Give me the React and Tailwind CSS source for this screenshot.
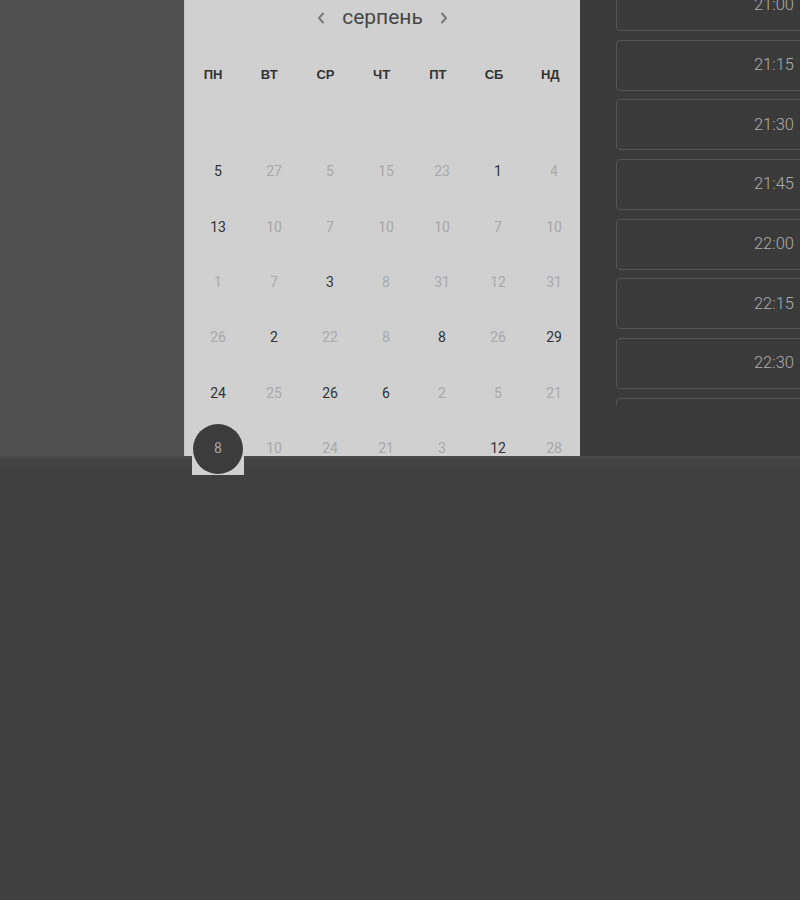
import React from "react";

const days = ["ПН", "ВТ", "СР", "ЧТ", "ПТ", "СБ", "НД"];

// d = dark (in month), l = light, s = selected
const rows = [
  [["5", "d"], ["27", "l"], ["5", "l"], ["15", "l"], ["23", "l"], ["1", "d"], ["4", "l"]],
  [["13", "d"], ["10", "l"], ["7", "l"], ["10", "l"], ["10", "l"], ["7", "l"], ["10", "l"]],
  [["1", "l"], ["7", "l"], ["3", "d"], ["8", "l"], ["31", "l"], ["12", "l"], ["31", "l"]],
  [["26", "l"], ["2", "d"], ["22", "l"], ["8", "l"], ["8", "d"], ["26", "l"], ["29", "d"]],
  [["24", "d"], ["25", "l"], ["26", "d"], ["6", "d"], ["2", "l"], ["5", "l"], ["21", "l"]],
  [["8", "s"], ["10", "l"], ["24", "l"], ["21", "l"], ["3", "l"], ["12", "d"], ["28", "l"]],
];

const slots = ["21:00", "21:15", "21:30", "21:45", "22:00", "22:15", "22:30", ""];

const Chevron = ({ dir }) => (
  <svg width="8" height="12" viewBox="0 0 8 12" fill="none" className="text-[#7a7a7a]">
    <path
      d={dir === "left" ? "M6 1.5 L2 6 L6 10.5" : "M2 1.5 L6 6 L2 10.5"}
      stroke="currentColor"
      strokeWidth="2"
      strokeLinecap="round"
      strokeLinejoin="round"
    />
  </svg>
);

const DayCell = ({ value, tone }) => {
  if (tone === "s") {
    return (
      <div className="flex h-[55.4px] items-center justify-center">
        <div className="relative z-20 flex h-[52px] w-[52px] items-center justify-center bg-[#d0d0d0]">
          <div className="flex h-[50px] w-[50px] items-center justify-center rounded-full bg-[#3c3c3c] text-[14px] text-[#a8a8a8]">
            {value}
          </div>
        </div>
      </div>
    );
  }
  return (
    <div
      className={`flex h-[55.4px] items-center justify-center text-[14px] ${
        tone === "d" ? "text-[#333]" : "text-[#a9a9a9]"
      }`}
    >
      {value}
    </div>
  );
};

const Calendar = () => {
  return (
    <div className="relative h-[456px] w-[396px] shrink-0 border-l border-[#c6c6c6] bg-[#d0d0d0] font-['Roboto',sans-serif]">
      <div className="flex h-[36px] items-center justify-center gap-[17px]">
        <Chevron dir="left" />
        <span className="text-[21px] text-[#474747]">серпень</span>
        <Chevron dir="right" />
      </div>

      <div className="mt-[14px] grid h-[50px] grid-cols-[repeat(7,56.2px)] font-['Liberation_Sans',sans-serif] text-[13px] font-bold text-[#333]">
        {days.map((d) => (
          <div key={d} className="flex items-center justify-center">
            {d}
          </div>
        ))}
      </div>

      <div className="ml-[5px] mt-[44px] grid grid-cols-[repeat(7,56px)]">
        {rows.map((row, i) =>
          row.map(([v, t], j) => <DayCell key={`${i}-${j}`} value={v} tone={t} />)
        )}
      </div>
    </div>
  );
};

const TimeSlots = () => {
  return (
    <div className="h-[456px] flex-1 overflow-hidden bg-[#3a3a3a] pl-[36px]">
      <div className="h-[405px] overflow-hidden">
        <div className="-mt-[20px] flex flex-col gap-[8.7px]">
          {slots.map((s, i) => (
            <div
              key={i}
              className="flex h-[51px] w-[220px] shrink-0 items-center justify-end rounded-[4px] border border-[#555] pr-[41px] font-['Roboto',sans-serif] text-[16.5px] font-light text-[#ababab]"
            >
              {s}
            </div>
          ))}
        </div>
      </div>
    </div>
  );
};

export default function App() {
  return (
    <div className="flex h-[900px] w-[800px] flex-col overflow-hidden bg-[#404040]">
      <div className="flex h-[456px] shrink-0">
        <div className="h-full w-[184px] shrink-0 bg-[#505050]" />
        <Calendar />
        <TimeSlots />
      </div>
      <div className="relative z-10 flex-1 border-t-2 border-[#4a4a4a] bg-gradient-to-b from-[#454545] to-[#404040] to-[12px]" />
    </div>
  );
}
